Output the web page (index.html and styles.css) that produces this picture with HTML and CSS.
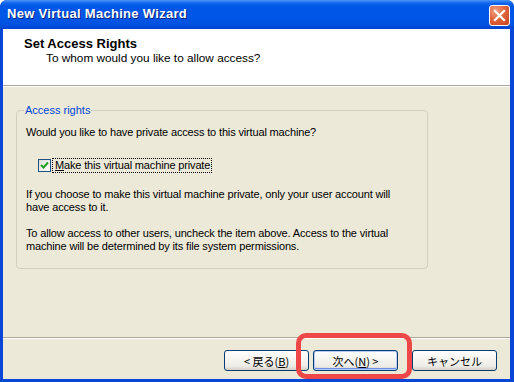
FILE: index.html
```html
<!DOCTYPE html>
<html lang="ja">
<head>
    <meta charset="UTF-8">
    <title>New Virtual Machine Wizard</title>
    <link rel="stylesheet" href="styles.css">
</head>
<body>
    <div class="window">
        <div class="titlebar">
            <span class="title">New Virtual Machine Wizard</span>
            <span class="close">
                <svg width="13" height="13" viewBox="0 0 13 13">
                    <path d="M2 2 L11 11 M11 2 L2 11" stroke="#fff" stroke-width="2.2" stroke-linecap="square"/>
                </svg>
            </span>
        </div>
        <div class="client">
            <div class="header">
                <div class="header-title">Set Access Rights</div>
                <div class="header-sub">To whom would you like to allow access?</div>
            </div>
            <div class="content">
                <fieldset class="group">
                    <legend>Access rights</legend>
                    <p class="question">Would you like to have private access to this virtual machine?</p>
                    <label class="check-row">
                        <span class="checkbox">
                            <svg width="9" height="9" viewBox="0 0 9 9">
                                <path d="M1 4 L3.5 6.5 L8 1.5" fill="none" stroke="#21a121" stroke-width="2"/>
                            </svg>
                        </span>
                        <span class="check-label"><u>M</u>ake this virtual machine private</span>
                    </label>
                    <p class="info first">If you choose to make this virtual machine private, only your user account will<br>have access to it.</p>
                    <p class="info">To allow access to other users, uncheck the item above. Access to the virtual<br>machine will be determined by its file system permissions.</p>
                </fieldset>
            </div>
            <div class="footer">
                <button class="btn">&lt; 戻る(<u>B</u>)</button>
                <button class="btn default">次へ(<u>N</u>) &gt;</button>
                <button class="btn cancel">キャンセル</button>
            </div>
        </div>
        <div class="highlight"></div>
    </div>
</body>
</html>
```

FILE: styles.css
```css
body {
    margin: 0;
    background-color: #fff;
    font-family: "Liberation Sans", Arial, sans-serif;
    font-size: 11px;
    color: #000;
}
.window {
    position: relative;
    width: 514px;
    height: 382px;
    display: flex;
    flex-direction: column;
    background-color: #0846d8;
    border-radius: 7px 7px 0 0;
    overflow: hidden;
}
.titlebar {
    height: 29px;
    flex: none;
    display: flex;
    align-items: center;
    justify-content: space-between;
    padding: 0 7px 0 7px;
    background: linear-gradient(#4a96f8 0, #1266ec 3px, #0058e8 6px, #0055e5 20px, #0051df 25px, #0042cc 29px);
}
.title {
    color: #fff;
    font-weight: bold;
    font-size: 13px;
    letter-spacing: 0.3px;
    text-shadow: 1px 1px #0b2280;
    margin-top: -2px;
}
.close {
    width: 19px;
    height: 19px;
    border: 1px solid #fff;
    border-radius: 3px;
    display: flex;
    align-items: center;
    justify-content: center;
    background: radial-gradient(circle at 30% 25%, #f0a080 0, #e0663f 45%, #c8421b 100%);
    margin-top: 1px;
    margin-right: -3px;
}
.client {
    flex: 1;
    margin: 0 4px 3px 3px;
    background-color: #ece9d8;
    display: flex;
    flex-direction: column;
}
.header {
    height: 57px;
    background-color: #fff;
    border-bottom: 1px solid #aca899;
    padding: 8px 0 0 21px;
    box-sizing: border-box;
}
.header-title {
    font-weight: bold;
    font-size: 13px;
    line-height: 13px;
}
.header-sub {
    margin-top: 2px;
    margin-left: 22px;
    font-size: 11.8px;
    line-height: 13px;
}
.content {
    flex: 1;
    border-top: 1px solid #fff;
    padding: 17px 0 0 13px;
}
.group {
    width: 412px;
    box-sizing: border-box;
    margin: 0;
    padding: 9px 9px 15px 9px;
    border: 1px solid #d0d0bf;
    border-radius: 4px;
    letter-spacing: -0.15px;
}
.group legend {
    color: #0046d5;
    line-height: 13px;
    padding: 0 1px;
    margin-left: -2px;
    letter-spacing: 0;
}
.group p {
    margin: 0;
    line-height: 13px;
}
.check-row {
    display: flex;
    align-items: center;
    margin: 19px 0 0 12px;
    height: 14px;
}
.checkbox {
    width: 11px;
    height: 11px;
    border: 1px solid #1c5180;
    background: linear-gradient(135deg, #dcdcd7, #fff);
    display: flex;
    align-items: center;
    justify-content: center;
}
.check-label {
    margin-left: 2px;
    padding: 0 1px 0 2px;
    outline: 1px dotted #000;
    line-height: 13px;
}
.group .info {
    margin-top: 13px;
}
.group .info.first {
    margin-top: 16px;
}
.footer {
    height: 42px;
    flex: none;
    border-top: 1px solid #aca899;
    box-shadow: inset 0 1px #fff;
    display: flex;
    justify-content: flex-end;
    align-items: flex-start;
    padding: 12px 13px 0 0;
    box-sizing: border-box;
}
.btn {
    width: 85px;
    height: 21px;
    margin-left: 4px;
    padding: 0;
    font-family: "Noto Sans CJK JP", "Liberation Sans", sans-serif;
    font-size: 11px;
    color: #000;
    border: 1px solid #003c74;
    border-radius: 3px;
    background: linear-gradient(#ffffff 0, #f4f3ee 50%, #ecebe6 80%, #d6d0c5 100%);
}
.btn.default {
    box-shadow: inset 0 0 0 1px #b5cdf4, inset 0 -1px 0 1px #6b8ee8;
}
.btn.cancel {
    margin-left: 14px;
}
.highlight {
    position: absolute;
    left: 296px;
    top: 333px;
    width: 106px;
    height: 36px;
    border: 5px solid #ee4747;
    border-radius: 10px;
}
```
